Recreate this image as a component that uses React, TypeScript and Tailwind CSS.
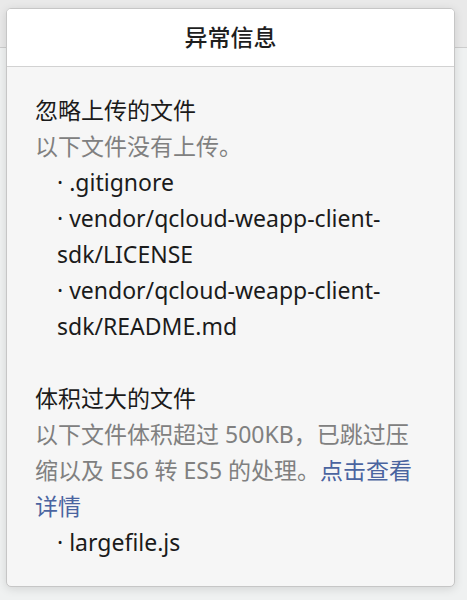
import React from 'react';

const font = { fontFamily: '"Noto Sans", "Noto Sans CJK SC", sans-serif' };

function FileItem({ name }: { name: string }) {
  return <li className="pl-[22px] text-[#1b1b1b]">· {name}</li>;
}

export default function App() {
  return (
    <div className="relative w-[467px] h-[600px] bg-[#eff1f1] overflow-hidden" style={font}>
      {/* Background window chrome behind the dialog */}
      <div className="h-[48px] bg-[#e9e9e9] border-b border-[#cdcdcd]" />

      {/* Dialog */}
      <div className="absolute left-[6px] top-[8px] w-[449px] h-[579px] flex flex-col rounded-[5px] border border-[#c6c6c6] bg-[#f6f6f6] shadow-[0_2px_10px_rgba(0,0,0,0.12)] overflow-hidden">
        <div className="h-[58px] flex-shrink-0 flex items-center justify-center bg-white border-b border-[#d2d2d2] text-[23px] font-medium text-[#1e1e1e]">
          异常信息
        </div>

        <div className="flex-1 pt-[25px] pl-[28px] pr-[26px] text-[23px] leading-[36px]">
          <div className="text-[#1b1b1b]">忽略上传的文件</div>
          <div className="text-[#808080]">以下文件没有上传。</div>
          <ul>
            <FileItem name=".gitignore" />
            <FileItem name="vendor/qcloud-weapp-client-sdk/LICENSE" />
            <FileItem name="vendor/qcloud-weapp-client-sdk/README.md" />
          </ul>

          <div className="mt-[36px] text-[#1b1b1b]">体积过大的文件</div>
          <div className="text-[#808080]">
            以下文件体积超过 500KB，已跳过压缩以及 ES6 转 ES5 的处理。
            <span className="text-[#4a64a0]">点击查看详情</span>
          </div>
          <ul>
            <FileItem name="largefile.js" />
          </ul>
        </div>
      </div>
    </div>
  );
}
